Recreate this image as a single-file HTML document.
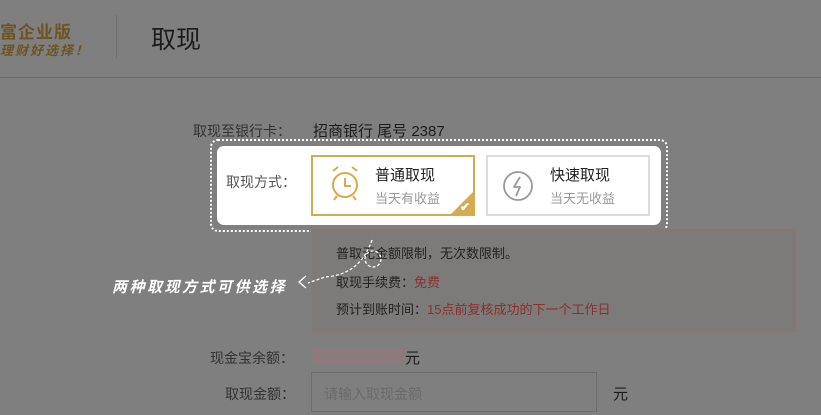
<!DOCTYPE html>
<html><head><meta charset="utf-8"><style>
body{margin:0;width:821px;height:415px;overflow:hidden;background:#7f7f7f;font-family:"Liberation Sans","Noto Sans CJK SC",sans-serif;position:relative;color:#262626}
.a{position:absolute;white-space:nowrap}
</style></head><body>
<div class="a" style="left:0;top:18px;font-size:17px;font-weight:bold;color:#6e5420;letter-spacing:1px">富企业版</div>
<div class="a" style="left:0;top:40px;font-size:13px;font-weight:bold;color:#6e5420;font-style:italic;letter-spacing:2px">理财好选择！</div>
<div class="a" style="left:116px;top:15px;width:1px;height:43px;background:#6e6e6e"></div>
<div class="a" style="left:151px;top:20px;font-size:25px;color:#1c1c1c">取现</div>
<div class="a" style="left:0;top:77px;width:821px;height:1px;background:#6c6c6c"></div>

<div class="a" style="left:193px;top:121px;font-size:14px;color:#333">取现至银行卡：</div>
<div class="a" style="left:313px;top:120px;font-size:15px;color:#1c1c1c">招商银行 尾号 2387</div>

<div class="a" style="left:210px;top:139px;border:2px dotted #fff;border-radius:8px;box-sizing:border-box;width:458px;height:93px"></div>
<div class="a" style="left:217px;top:146px;width:444px;height:79px;background:#fff;border-radius:7px"></div>
<div class="a" style="left:226px;top:172px;font-size:14px;color:#555">取现方式：</div>
<div class="a" style="left:311px;top:155px;width:164px;height:61px;border:2px solid #d6ab50;box-sizing:border-box;overflow:hidden">
 <svg class="a" style="left:15px;top:8px" width="34" height="40" viewBox="0 0 34 40" fill="none" stroke="#d6ab50" stroke-width="2"><circle cx="17" cy="20" r="12"/><path d="M17 13v8h6M5 6l5-4M29 6l-5-4M9 31l-3 4M25 31l3 4"/></svg>
 <div class="a" style="left:62px;top:7px;font-size:15px;color:#222">普通取现</div>
 <div class="a" style="left:62px;top:31px;font-size:13px;color:#999">当天有收益</div>
 <div class="a" style="right:-2px;bottom:-2px;width:0;height:0;border-left:26px solid transparent;border-bottom:26px solid #d6ab50"></div>
 <div class="a" style="right:3px;bottom:0px;color:#fff;font-size:12px;font-weight:bold">✔</div>
</div>
<div class="a" style="left:486px;top:155px;width:164px;height:61px;border:2px solid #dcdcdc;box-sizing:border-box">
 <svg class="a" style="left:14px;top:13px" width="32" height="32" viewBox="0 0 32 32" fill="none" stroke="#999" stroke-width="1.8"><circle cx="16" cy="16" r="14"/><path d="M18 7l-6 10h6l-4 9" stroke-linejoin="round"/></svg>
 <div class="a" style="left:62px;top:7px;font-size:15px;color:#222">快速取现</div>
 <div class="a" style="left:62px;top:31px;font-size:13px;color:#999">当天无收益</div>
</div>

<div class="a" style="left:311px;top:228px;width:486px;height:105px;border:1px solid #8a7a76;background:#7d7b79;box-sizing:border-box"></div>
<div class="a" style="left:336px;top:243px;font-size:13px;color:#222">普取无金额限制，无次数限制。</div>
<div class="a" style="left:336px;top:272px;font-size:13px;color:#222">取现手续费：<span style="color:#8e2e2e">免费</span></div>
<div class="a" style="left:336px;top:299px;font-size:13px;color:#222">预计到账时间：<span style="color:#8e2e2e">15点前复核成功的下一个工作日</span></div>

<svg class="a" style="left:290px;top:235px" width="100" height="60" fill="none" stroke="#fff" stroke-width="1.3" stroke-dasharray="3 2"><path d="M82 5 Q70 40 35 42 L18 48"/><circle cx="83" cy="24" r="8"/><path d="M16 41l-7 6 7 6" stroke-dasharray="none"/></svg>
<div class="a" style="left:112px;top:276px;font-size:15px;color:#fff;font-weight:bold;font-style:italic;letter-spacing:2.5px">两种取现方式可供选择</div>

<div class="a" style="left:210px;top:348px;font-size:14px;color:#333">现金宝余额：</div>
<div class="a" style="left:313px;top:350px;width:92px;height:13px;background:#8d7a7c"></div>
<div class="a" style="left:405px;top:347px;font-size:15px;color:#1c1c1c">元</div>
<div class="a" style="left:225px;top:384px;font-size:14px;color:#333">取现金额：</div>
<div class="a" style="left:311px;top:372px;width:286px;height:40px;border:1px solid #6e6e6e;box-sizing:border-box"></div>
<div class="a" style="left:324px;top:384px;font-size:14px;color:#6a6a6a">请输入取现金额</div>
<div class="a" style="left:613px;top:383px;font-size:15px;color:#1c1c1c">元</div>
</body></html>
